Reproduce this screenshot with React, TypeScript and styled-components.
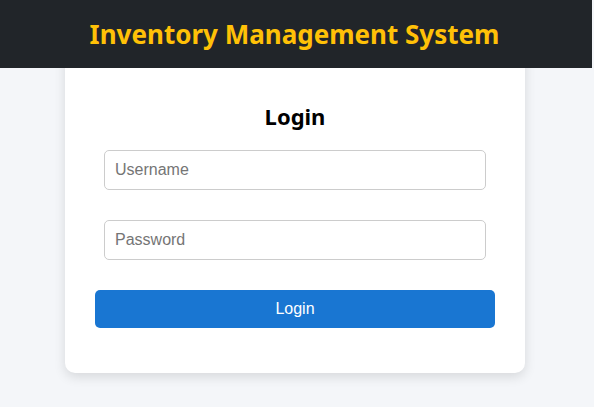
import React from "react";
import styled, { createGlobalStyle } from "styled-components";

const Global = createGlobalStyle`
  html, body { margin: 0; padding: 0; background: #f4f6f9; }
  body { font-family: "Liberation Sans", Arial, sans-serif; }
  * { box-sizing: border-box; }
`;

const Page = styled.div`
  width: 590px;
  min-height: 407px;
  display: flex;
  flex-direction: column;
  align-items: center;
`;

const Header = styled.header`
  position: relative;
  z-index: 1;
  width: 594px;
  height: 68px;
  background: #212529;
  display: flex;
  align-items: center;
  justify-content: center;
`;

const Title = styled.h1`
  margin: 0 0 0 -1px;
  font-family: "Noto Sans", "Open Sans", sans-serif;
  font-weight: 700;
  font-size: 26px;
  color: #ffc107;
`;

const Card = styled.main`
  width: 460px;
  margin-top: -20px;
  padding: 53px 30px 45px;
  background: #fff;
  border-radius: 10px;
  box-shadow: 0 4px 12px rgba(0, 0, 0, 0.12);
  display: flex;
  flex-direction: column;
  align-items: center;
`;

const Heading = styled.h2`
  margin: 0 0 19px;
  font-family: "Noto Sans", "Open Sans", sans-serif;
  font-weight: 700;
  font-size: 22px;
  line-height: 30px;
  color: #000;
`;

const Input = styled.input`
  width: 382px;
  height: 40px;
  padding: 0 10px;
  margin-bottom: 30px;
  border: 1px solid #ccc;
  border-radius: 5px;
  font-family: "Liberation Sans", Arial, sans-serif;
  font-size: 16px;
  color: #333;
  outline: none;
  &::placeholder { color: #757575; }
`;

const Button = styled.button`
  width: 400px;
  height: 38px;
  border: none;
  border-radius: 5px;
  background: #1976d2;
  color: #fff;
  font-family: "Liberation Sans", Arial, sans-serif;
  font-size: 16px;
  cursor: pointer;
`;

export default function App() {
  return (
    <>
      <Global />
      <Page>
        <Header>
          <Title>Inventory Management System</Title>
        </Header>
        <Card>
          <Heading>Login</Heading>
          <Input placeholder="Username" />
          <Input type="password" placeholder="Password" />
          <Button>Login</Button>
        </Card>
      </Page>
    </>
  );
}
